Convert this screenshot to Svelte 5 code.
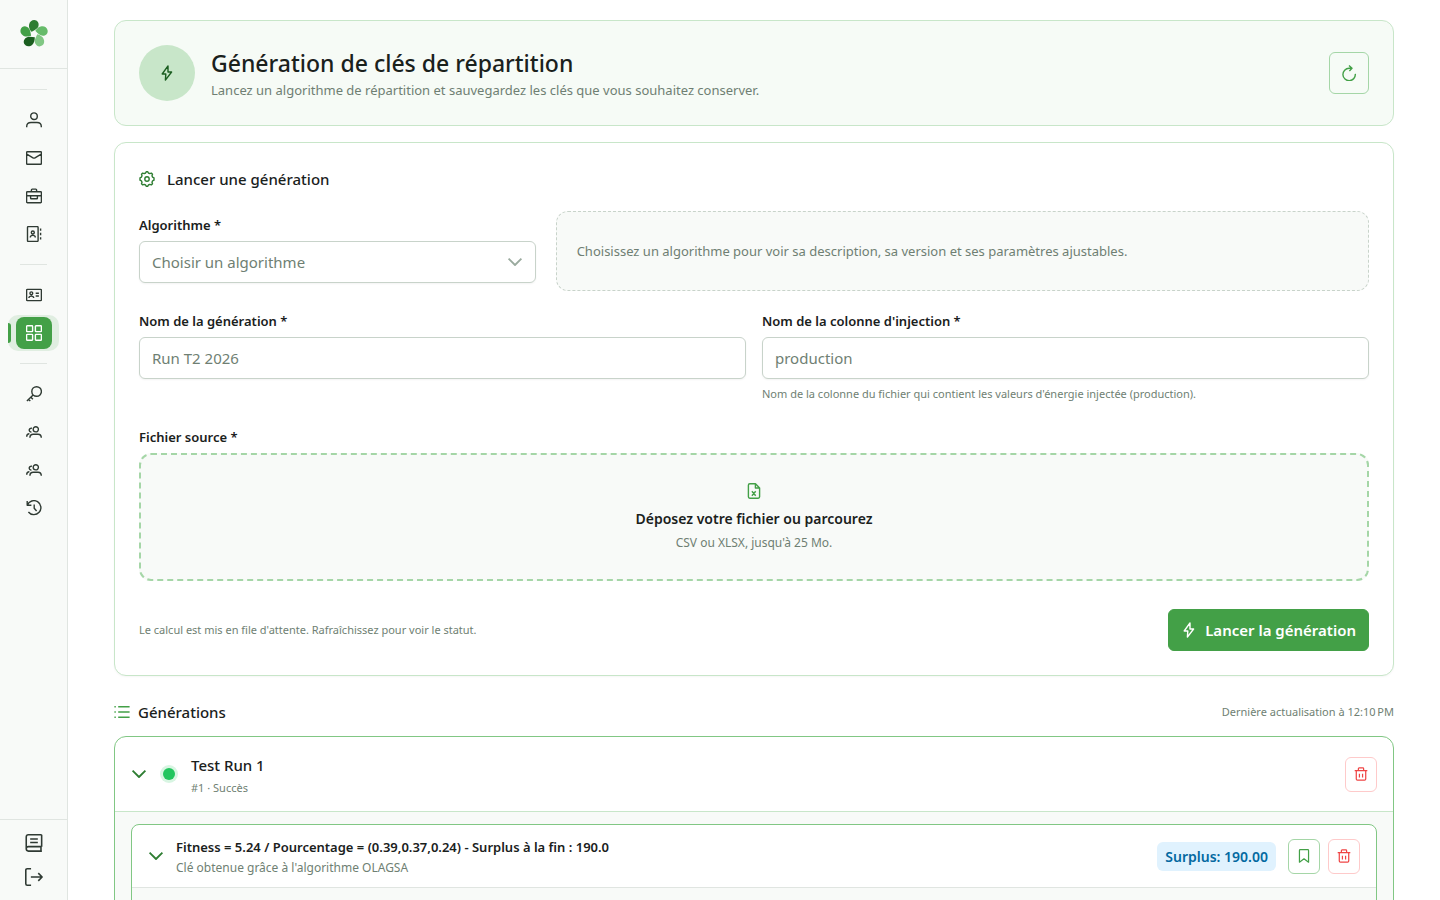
<script lang="ts">
	type Item = { icon: string; label: string; active?: boolean };

	// 16x16 stroke icons
	const icons: Record<string, string> = {
		user: 'M8 .9a3.3 3.3 0 1 1 0 6.6a3.3 3.3 0 1 1 0-6.6M.7 15.2v-.7c0-2.5 1.8-4 4.3-4h6c2.5 0 4.3 1.5 4.3 4v.7',
		mail: 'M1.4 1.7h13.2q.8 0 .8.8v11q0 .8-.8.8H1.4q-.8 0-.8-.8v-11q0-.8.8-.8M.8 4.2l6.2 3.6q1 .6 2 0l6.2-3.6',
		briefcase:
			'M1.4 3.7h13.2q.8 0 .8.8v9.4q0 .8-.8.8H1.4q-.8 0-.8-.8V4.5q0-.8.8-.8M5.4 3.5V1.9q0-.8.8-.8h3.6q.8 0 .8.8v1.6M.8 7.8h14.4M4.6 8v2.2q0 .6.6.6h5.6q.6 0 .6-.6V8',
		contacts:
			'M2.4.6h8.8q.9 0 .9.9v13q0 .9-.9.9H2.4q-.9 0-.9-.9v-13q0-.9.9-.9M14.6 2.4v2.4M14.6 6.8v2.4M14.6 11.2v2.4M6.8 5a1.5 1.5 0 1 1 0 3a1.5 1.5 0 1 1 0-3M4.3 11.4c0-1.5.9-2 2.5-2s2.5.5 2.5 2',
		idcard:
			'M1.4 2.4h13.2q.8 0 .8.8v9.6q0 .8-.8.8H1.4q-.8 0-.8-.8V3.2q0-.8.8-.8M5.3 4.9a1.4 1.4 0 1 1 0 2.8a1.4 1.4 0 1 1 0-2.8M2.9 11c0-1.4.9-1.9 2.4-1.9s2.4.5 2.4 1.9M9.7 6.3h3.2M9.7 9h3.2',
		grid: 'M1.2.8h4.8q.6 0 .6.6v4.6q0 .6-.6.6H1.2q-.6 0-.6-.6V1.4q0-.6.6-.6M10 .8h4.8q.6 0 .6.6v4.6q0 .6-.6.6H10q-.6 0-.6-.6V1.4q0-.6.6-.6M1.2 9.4h4.8q.6 0 .6.6v4.6q0 .6-.6.6H1.2q-.6 0-.6-.6V10q0-.6.6-.6M10 9.4h4.8q.6 0 .6.6v4.6q0 .6-.6.6H10q-.6 0-.6-.6V10q0-.6.6-.6',
		key: 'M10.6.7a4.8 4.8 0 1 1 0 9.6a4.8 4.8 0 1 1 0-9.6M7.1 8.9L.9 15.1M4.9 11.2l2 2M2.6 13.4l1.7 1.7',
		users:
			'M9.8 2.7a2.6 2.6 0 1 1 0 5.2a2.6 2.6 0 1 1 0-5.2M3.9 13.8c0-2.4 1.2-3.6 3.3-3.6h4.8c2.1 0 3.3 1.2 3.3 3.6M5.9 4.3c-1.5-.3-2.7.5-2.7 1.8c0 1.2.9 2 2.2 1.9M.7 12.8c0-2 .8-3 2.7-3',
		history: 'M1.2 1v4.2h4.2M1.4 5a7 7 0 1 1 1 7M8.2 4.6v3.6l2.4 2.8',
		book: 'M14.8.7v10.6M14.8.7H3Q1.1.7 1.1 2.6v10.6M14.8 11.2H3q-1.9 0-1.9 2t1.9 2h12M14.2 11.2v4M4.6 4.4h6.8M4.6 7.6h6.8',
		logout: 'M5.4.7H2Q.7.7.7 2v12Q.7 15.3 2 15.3h3.4M5.2 8h10M11.8 4.6L15.2 8l-3.4 3.4',
		bolt: 'M9 .9L3.2 9h3.6l-.4 6.1L12.6 7H9z',
		cog: 'M6.6 2L7.2.7h1.6L9.4 2l1.4.6 1.5-.5 1.2 1.2-.5 1.5.6 1.4 1.4.6v2.4l-1.4.6-.6 1.4.5 1.5-1.2 1.2-1.5-.5-1.4.6-.6 1.3H7.2L6.6 14l-1.4-.6-1.5.5-1.2-1.2.5-1.5-.6-1.4L1 9.2V6.8l1.4-.6L3 4.8l-.5-1.5 1.2-1.2 1.5.5zM8 5.8a2.2 2.2 0 1 1 0 4.4a2.2 2.2 0 1 1 0-4.4',
		refresh: 'M14.3 8.9a6.2 6.2 0 1 1-6.2-5.6h2.8M8 .6l3 2.7-2.6 2.6',
		down: 'M1.6 4.6L8 11l6.4-6.4',
		excel: 'M9.5.8H3.8q-1.4 0-1.4 1.4v11.6q0 1.4 1.4 1.4h8.4q1.4 0 1.4-1.4V4.9zM9.4 1v4h4M5.9 8.2l3.8 4.6M9.7 8.2l-3.8 4.6',
		list: 'M4.2 2.8h11.4M4.2 8h11.4M4.2 13.2h11.4M.4 2.8h1.4M.4 8h1.4M.4 13.2h1.4',
		trash: 'M.8 4.2h14.4M5 4V2q0-.9.9-.9h4.2q.9 0 .9.9v2M2.6 4.4v9.3q0 1.3 1.3 1.3h8.2q1.3 0 1.3-1.3V4.4M6.2 7.6v4.4M9.8 7.6v4.4',
		bookmark: 'M3.7.8h8.6q.9 0 .9.9v13.4L8 11.2l-5.2 3.9V1.7q0-.9.9-.9'
	};

	const groups: Item[][] = [
		[
			{ icon: 'user', label: 'Profil' },
			{ icon: 'mail', label: 'Messages' },
			{ icon: 'briefcase', label: 'Gestion' },
			{ icon: 'contacts', label: 'Contacts' }
		],
		[
			{ icon: 'idcard', label: 'Membres' },
			{ icon: 'grid', label: 'Clés de répartition', active: true }
		],
		[
			{ icon: 'key', label: 'Clés' },
			{ icon: 'users', label: 'Communautés' },
			{ icon: 'users', label: 'Utilisateurs' },
			{ icon: 'history', label: 'Historique' }
		]
	];

	const petals = [
		{ angle: 0, color: '#2e7d32' },
		{ angle: 72, color: '#66bb6a' },
		{ angle: 144, color: '#81c784' },
		{ angle: 216, color: '#1b5e20' },
		{ angle: 288, color: '#43a047' }
	];

	let algorithm = $state('');
	let runName = $state('');
	let column = $state('');
</script>

{#snippet icon(name: string, size = 16)}
	<svg class="icon" width={size} height={size} viewBox="0 0 16 16" aria-hidden="true">
		<path d={icons[name]} />
	</svg>
{/snippet}

<div class="shell">
	<aside class="sidebar">
		<a class="logo" href="#home" aria-label="Accueil">
			<svg width="32" height="32" viewBox="-16 -16 32 32" aria-hidden="true">
				{#each petals as p}
					<path
						transform="rotate({p.angle})"
						fill={p.color}
						d="M-2.6-2.2C-4.6-5-5.4-7.2-4.9-9.6C-4.3-12.6-2-14.2.3-14.1C3.2-14 5-11.6 4.6-8.8C4.2-5.6 1.2-4-2.6-2.2z"
					/>
				{/each}
			</svg>
		</a>
		<nav>
			{#each groups as group}
				<div class="divider"></div>
				{#each group as item}
					<a class="nav-item" class:active={item.active} href="#{item.icon}" aria-label={item.label}>
						<span class="nav-icon">{@render icon(item.icon)}</span>
					</a>
				{/each}
			{/each}
		</nav>
		<div class="sidebar-foot">
			<a href="#docs" aria-label="Documentation">{@render icon('book', 18)}</a>
			<a href="#logout" aria-label="Déconnexion">{@render icon('logout', 18)}</a>
		</div>
	</aside>

	<main>
		<div class="content">
			<header class="hero">
				<span class="hero-icon">{@render icon('bolt')}</span>
				<div class="grow">
					<h1>Génération de clés de répartition</h1>
					<p>Lancez un algorithme de répartition et sauvegardez les clés que vous souhaitez conserver.</p>
				</div>
				<button class="refresh" aria-label="Rafraîchir">{@render icon('refresh')}</button>
			</header>

			<form class="card" onsubmit={(e) => e.preventDefault()}>
				<h2 class="card-title">{@render icon('cog')}Lancer une génération</h2>

				<div class="algo-row">
					<div class="field algo">
						<label for="algorithm">Algorithme *</label>
						<div class="select">
							<select id="algorithm" bind:value={algorithm}>
								<option value="">Choisir un algorithme</option>
								<option value="olagsa">OLAGSA</option>
							</select>
							<span class="caret">{@render icon('down')}</span>
						</div>
					</div>
					<p class="hint-box">
						Choisissez un algorithme pour voir sa description, sa version et ses paramètres ajustables.
					</p>
				</div>

				<div class="two-cols">
					<div class="field">
						<label for="run-name">Nom de la génération *</label>
						<input id="run-name" type="text" placeholder="Run T2 2026" bind:value={runName} />
					</div>
					<div class="field">
						<label for="column">Nom de la colonne d'injection *</label>
						<input id="column" type="text" placeholder="production" bind:value={column} />
						<small>Nom de la colonne du fichier qui contient les valeurs d'énergie injectée (production).</small>
					</div>
				</div>

				<div class="field">
					<label for="source">Fichier source *</label>
					<label class="dropzone" for="source">
						{@render icon('excel')}
						<span class="drop-title">Déposez votre fichier ou parcourez</span>
						<small class="detail">CSV ou XLSX, jusqu'à 25 Mo.</small>
					</label>
					<input id="source" type="file" accept=".csv,.xlsx" hidden />
				</div>

				<footer class="card-foot">
					<small>Le calcul est mis en file d'attente. Rafraîchissez pour voir le statut.</small>
					<button class="primary">{@render icon('bolt')}Lancer la génération</button>
				</footer>
			</form>

			<section>
				<div class="list-head">
					<h2>{@render icon('list')}Générations</h2>
					<small>Dernière actualisation à 12:10&#8239;PM</small>
				</div>

				<article class="run">
					<header class="run-head">
						<button class="toggle" aria-label="Replier la génération">{@render icon('down')}</button>
						<span class="status"></span>
						<div class="grow">
							<h3>Test Run 1</h3>
							<small>#1 · Succès</small>
						</div>
						<button class="square danger" aria-label="Supprimer la génération">{@render icon('trash', 14)}</button>
					</header>
					<div class="run-body">
						<div class="result">
							<header class="result-head">
								<button class="toggle" aria-label="Replier la clé">{@render icon('down')}</button>
								<div class="grow">
									<h4>Fitness = 5.24 / Pourcentage = (0.39,0.37,0.24) - Surplus à la fin : 190.0</h4>
									<small class="detail">Clé obtenue grâce à l'algorithme OLAGSA</small>
								</div>
								<span class="badge">Surplus: 190.00</span>
								<div class="actions">
									<button class="square save" aria-label="Sauvegarder la clé">{@render icon('bookmark', 14)}</button>
									<button class="square danger" aria-label="Supprimer la clé">{@render icon('trash', 14)}</button>
								</div>
							</header>
							<div class="result-body"></div>
						</div>
					</div>
				</article>
			</section>
		</div>
	</main>
</div>

<style>
	:global(body) {
		background: #fff;
	}

	.shell {
		display: flex;
		height: 100vh;
		font-family: 'Segoe UI', 'Noto Sans', 'Open Sans', sans-serif;
		font-size: 15px;
		color: #1a211c;
	}

	.shell,
	.shell :global(*) {
		box-sizing: border-box;
	}

	.icon {
		display: block;
		flex-shrink: 0;
		fill: none;
		stroke: currentColor;
		stroke-width: 1.4;
		stroke-linejoin: round;
	}

	h1,
	h2,
	h3,
	h4,
	p {
		margin: 0;
	}

	h1,
	h2,
	h3 {
		font-weight: 500;
	}

	small {
		font-size: 11px;
		line-height: 18px;
		color: #6f7f73;
	}

	small.detail {
		font-size: 12px;
	}

	button,
	input,
	select {
		font: inherit;
	}

	button {
		display: flex;
		align-items: center;
		justify-content: center;
		padding: 0;
		cursor: pointer;
	}

	.grow {
		flex: 1;
		min-width: 0;
		display: flex;
		flex-direction: column;
	}

	/* sidebar */
	.sidebar {
		width: 68px;
		flex-shrink: 0;
		display: flex;
		flex-direction: column;
		background: #f8faf8;
		border-right: 1px solid #e0e5e1;
	}

	.logo {
		height: 69px;
		display: flex;
		align-items: center;
		justify-content: center;
		border-bottom: 1px solid #e0e5e1;
	}

	nav {
		flex: 1;
		padding: 8px;
		display: flex;
		flex-direction: column;
		gap: 2px;
	}

	.divider {
		height: 1px;
		margin: 10px 12px;
		background: #e0e5e1;
	}

	.divider:first-child {
		margin-top: 12px;
	}

	.nav-item {
		display: flex;
		align-items: center;
		justify-content: center;
		height: 36px;
		border-radius: 10px;
		color: #2f3a33;
	}

	.nav-icon {
		display: flex;
		align-items: center;
		justify-content: center;
		width: 36px;
		height: 32px;
		border-radius: 8px;
	}

	.nav-item.active {
		position: relative;
		background: #e0eee1;
	}

	.nav-item.active::before {
		content: '';
		position: absolute;
		left: 0;
		top: 8px;
		width: 3px;
		height: 20px;
		border-radius: 0 3px 3px 0;
		background: #43a047;
	}

	.active .nav-icon {
		background: #43a047;
		color: #fff;
	}

	.sidebar-foot {
		padding: 6px 8px;
		border-top: 1px solid #e0e5e1;
	}

	.sidebar-foot a {
		display: flex;
		align-items: center;
		justify-content: center;
		height: 34px;
		color: #2f3a33;
	}

	/* page */
	main {
		flex: 1;
		min-width: 0;
		padding: 20px 24px;
		overflow-y: auto;
		scrollbar-width: none;
	}

	.content {
		max-width: 1280px;
		margin: 0 auto;
	}

	.hero {
		display: flex;
		align-items: center;
		gap: 16px;
		padding: 24px;
		border: 1px solid #c8e6c9;
		border-radius: 12px;
		background: #f6fbf6;
	}

	.hero-icon {
		display: flex;
		align-items: center;
		justify-content: center;
		width: 56px;
		height: 56px;
		border-radius: 50%;
		background: #c8e6c9;
		color: #1b5e20;
	}

	h1 {
		font-size: 23px;
		line-height: 34px;
	}

	.hero p {
		font-size: 13px;
		line-height: 20px;
		color: #6f7f73;
	}

	.refresh {
		width: 40px;
		height: 42px;
		border: 1px solid #a5d6a7;
		border-radius: 6px;
		background: transparent;
		color: #43a047;
	}

	.card {
		margin-top: 16px;
		padding: 24px;
		border: 1px solid #c8e6c9;
		border-radius: 12px;
		background: #fff;
		box-shadow: 0 1px 2px rgba(0, 0, 0, 0.04);
	}

	.card-title {
		display: flex;
		align-items: center;
		gap: 12px;
		margin-bottom: 20px;
		font-size: 15px;
		line-height: 24px;
	}

	.card-title .icon {
		color: #2e7d32;
	}

	.algo-row {
		display: grid;
		grid-template-columns: repeat(12, 1fr);
		gap: 20px;
	}

	.algo {
		grid-column: span 4;
		padding: 4px 0 8px;
	}

	.hint-box {
		grid-column: span 8;
		display: flex;
		align-items: center;
		padding: 0 20px;
		border: 1px dashed #c8d3ca;
		border-radius: 12px;
		background: #f8faf8;
		font-size: 13px;
		color: #6f7f73;
	}

	.two-cols {
		display: grid;
		grid-template-columns: 1fr 1fr;
		gap: 16px;
		margin: 20px 0 24px;
	}

	.field {
		display: flex;
		flex-direction: column;
		gap: 6px;
	}

	.field label {
		font-size: 13px;
		line-height: 20px;
		font-weight: 600;
	}

	input[type='text'],
	select {
		width: 100%;
		height: 42px;
		padding: 0 12px;
		border: 1px solid #c8d3ca;
		border-radius: 6px;
		background: #fff;
		color: #6f7f73;
		box-shadow: 0 1px 2px rgba(18, 18, 23, 0.05);
	}

	input::placeholder {
		color: #6f7f73;
		opacity: 1;
	}

	.select {
		position: relative;
	}

	select {
		display: block;
		appearance: none;
	}

	.caret {
		position: absolute;
		right: 13px;
		top: 13px;
		color: #9aaa9e;
		pointer-events: none;
	}

	.field .dropzone {
		display: flex;
		flex-direction: column;
		align-items: center;
		justify-content: center;
		height: 128px;
		border: 2px dashed #a5d6a7;
		border-radius: 12px;
		background: #f8faf8;
		font-weight: 400;
		cursor: pointer;
	}

	.dropzone .icon {
		color: #43a047;
	}

	.drop-title {
		margin: 8px 0 3px;
		font-size: 14px;
		line-height: 24px;
		font-weight: 600;
	}

	.card-foot {
		display: flex;
		align-items: center;
		justify-content: space-between;
		margin-top: 28px;
	}

	.primary {
		gap: 8px;
		height: 42px;
		padding: 0 12px;
		border: 1px solid #43a047;
		border-radius: 6px;
		background: #43a047;
		color: #fff;
		font-weight: 600;
	}

	/* generations */
	.list-head {
		display: flex;
		align-items: center;
		justify-content: space-between;
		margin: 24px 0 12px;
	}

	.list-head h2 {
		display: flex;
		align-items: center;
		gap: 8px;
		font-size: 15px;
		line-height: 24px;
	}

	.list-head .icon {
		color: #43a047;
	}

	.run {
		border: 1px solid #81c784;
		border-radius: 12px;
		background: #fff;
		overflow: hidden;
	}

	.run-head {
		display: flex;
		align-items: center;
		gap: 16px;
		min-height: 75px;
		padding: 0 16px;
		border-bottom: 1px solid #c8e6c9;
	}

	.toggle {
		border: 0;
		background: none;
		color: #2e7d32;
	}

	.toggle .icon,
	.caret .icon {
		stroke-width: 1.8;
	}

	.status {
		width: 12px;
		height: 12px;
		border-radius: 50%;
		background: #22c55e;
		box-shadow: 0 0 0 3px #d8f5e2;
	}

	h3 {
		font-size: 15px;
		line-height: 28px;
	}

	h4 {
		font-size: 13px;
		line-height: 24px;
		font-weight: 600;
	}

	.square {
		width: 32px;
		height: 35px;
		border: 1px solid;
		border-radius: 6px;
		background: transparent;
	}

	.danger {
		border-color: #fecaca;
		color: #ef4444;
	}

	.save {
		border-color: #a5d6a7;
		color: #43a047;
	}

	.run-body {
		padding: 12px 16px;
		background: #f8faf8;
	}

	.result {
		border: 1px solid #81c784;
		border-radius: 8px;
		background: #fff;
		overflow: hidden;
	}

	.result-head {
		display: flex;
		align-items: center;
		gap: 12px;
		min-height: 63px;
		padding: 0 16px;
		border-bottom: 1px solid #e0e5e1;
	}

	.badge {
		padding: 4px 8px;
		border-radius: 6px;
		background: #e0f2fe;
		color: #0369a1;
		font-size: 14px;
		line-height: 21px;
		font-weight: 600;
	}

	.actions {
		display: flex;
		gap: 8px;
	}

	.result-body {
		min-height: 160px;
		background: #f8faf8;
	}
</style>
